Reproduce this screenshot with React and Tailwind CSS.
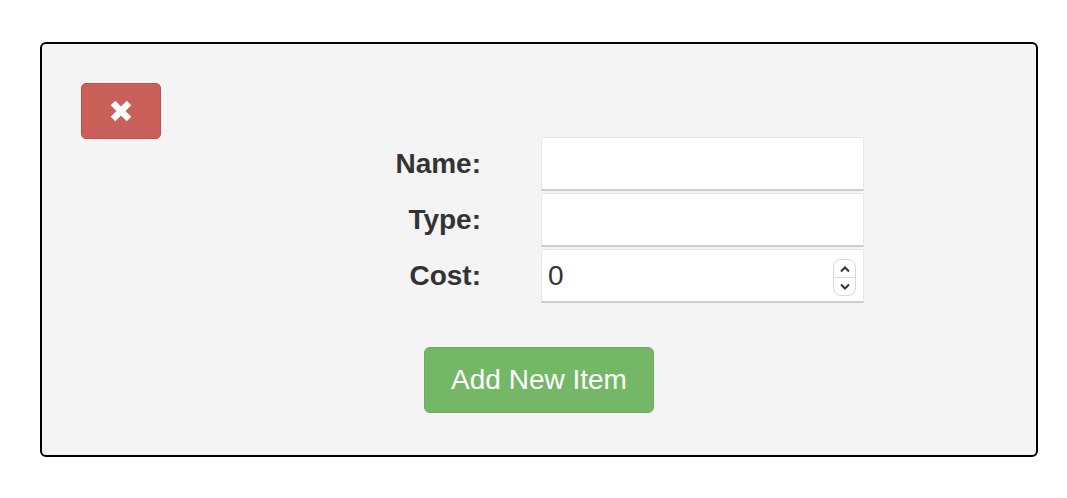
const Field = ({ label, children }) => (
  <div className="flex items-center">
    <label className="w-[140px] text-right text-[28px] font-bold text-[#333]">{label}</label>
    <div className="ml-[60px] relative w-[323px] h-[54px]">{children}</div>
  </div>
);

const inputCls =
  "w-full h-full bg-white border border-[#e8e8e8] border-b-2 border-b-[#cdcdcd] px-[6px] text-[28px] text-[#333] outline-none";

export default function App() {
  return (
    <div className="min-h-screen bg-white pt-[42px] pl-[40px]" style={{ fontFamily: '"Liberation Sans", Arial, sans-serif' }}>
      <div className="w-[998px] h-[415px] border-2 border-black rounded-[6px] bg-[#f4f4f4] pt-[39px] pl-[39px]">
        <div className="h-[54px]">
          <button className="w-[80px] h-[56px] rounded-[5px] bg-[#c9605a] border border-[#c04f48] flex items-center justify-center">
            <svg width="24" height="24" viewBox="0 0 24 24">
              <path d="M4 4 L20 20 M20 4 L4 20" stroke="white" strokeWidth="6.5" strokeLinecap="butt" />
            </svg>
          </button>
        </div>
        <div className="ml-[260px] flex flex-col gap-[2px]">
          <Field label="Name:">
            <input type="text" className={inputCls} />
          </Field>
          <Field label="Type:">
            <input type="text" className={inputCls} />
          </Field>
          <Field label="Cost:">
            <input type="text" defaultValue="0" className={inputCls} />
            <div className="absolute right-[8px] top-[10px] w-[23px] h-[37px] rounded-[8px] border border-[#d8d8d8] bg-white flex flex-col">
              <div className="flex-1 flex items-center justify-center border-b border-[#dcdcdc]">
                <svg width="12" height="8" viewBox="0 0 12 8">
                  <path d="M2 6.5 L6 2.5 L10 6.5" fill="none" stroke="#333" strokeWidth="2" />
                </svg>
              </div>
              <div className="flex-1 flex items-center justify-center">
                <svg width="12" height="8" viewBox="0 0 12 8">
                  <path d="M2 1.5 L6 5.5 L10 1.5" fill="none" stroke="#333" strokeWidth="2" />
                </svg>
              </div>
            </div>
          </Field>
        </div>
        <div className="mt-[44px] flex justify-center pr-[39px]">
          <button className="w-[230px] h-[66px] rounded-[6px] bg-[#74b767] border border-[#68ad5b] text-white text-[28px]">
            Add New Item
          </button>
        </div>
      </div>
    </div>
  );
}
